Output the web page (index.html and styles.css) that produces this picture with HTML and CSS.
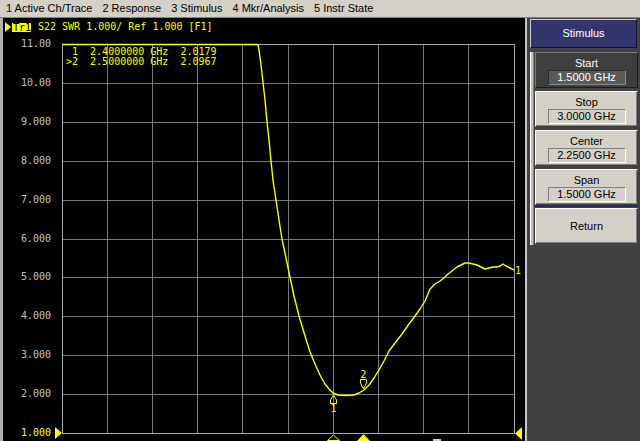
FILE: index.html
```html
<!DOCTYPE html>
<html>
<head>
<meta charset="utf-8">
<title>S22 SWR</title>
<link rel="stylesheet" href="styles.css">
</head>
<body>
<div class="menubar">
  <span class="menu-item">1 Active Ch/Trace</span>
  <span class="menu-item">2 Response</span>
  <span class="menu-item">3 Stimulus</span>
  <span class="menu-item">4 Mkr/Analysis</span>
  <span class="menu-item">5 Instr State</span>
</div>
<div class="main">
  <div class="chartwin">
    <div class="trace-header">
      <span class="tri"></span><span class="tr-badge">Tr1</span><span class="tr-text">S22 SWR 1.000/ Ref 1.000 [F1]</span>
    </div>
    <svg class="plot" viewBox="3 36 522 405" width="522" height="405">
      <g class="ylab">
        <text x="51" y="47">11.00</text>
        <text x="51" y="86">10.00</text>
        <text x="51" y="125">9.000</text>
        <text x="51" y="164">8.000</text>
        <text x="51" y="203">7.000</text>
        <text x="51" y="242">6.000</text>
        <text x="51" y="280">5.000</text>
        <text x="51" y="319">4.000</text>
        <text x="51" y="358">3.000</text>
        <text x="51" y="397">2.000</text>
        <text x="51" y="436" class="ylab-ref">1.000</text>
      </g>
      <path class="grid" d="M107.5 44V433M152.5 44V433M197.5 44V433M242.5 44V433M288.5 44V433M333.5 44V433M378.5 44V433M423.5 44V433M468.5 44V433M62 83.5H514M62 122.5H514M62 161.5H514M62 200.5H514M62 239.5H514M62 277.5H514M62 316.5H514M62 355.5H514M62 394.5H514"/>
      <rect class="frame" x="62.5" y="44.5" width="452" height="389"/>
      <text class="mk" x="66" y="55"> 1  2.4000000 GHz  2.0179</text>
      <text class="mk" x="66" y="65">&gt;2  2.5000000 GHz  2.0967</text>
      <polyline class="trace" points="62,44.5 258,44.5 259,50 261,65 263,82 265,100 267,122 269,140 271,161 273,180 276,200 279,220 282,239 286,258 290,277 294,296 299,316 305,336 310,352 315,364 320,375 325,384 329,389 333,393 338,395 346,395.5 354,395 359,393 364,390 369,385 374,378 379,370 384,361 389,351 395,343 402,334 409,324 415,316 420,309 425,301 430,289 435,284 440,281 444,278 448,274 452,271 457,267 461,265 465,263 469,263 473,264 477,265 481,267 485,269 489,268 493,267 497,267 500,266 503,264 506,266 510,268 514,270"/>
      <path class="mkshape" d="M333.5 395L336.5 400V403.5H330.5V400Z"/>
      <text class="mklab" x="333.5" y="412">1</text>
      <path class="mkshape" d="M360.5 379.5H366.5V383L363.5 389L360.5 383Z"/>
      <text class="mklab" x="363.5" y="378">2</text>
      <text class="mkend" x="515" y="274">1</text>
      <polygon class="fillmk" points="55,427 62,433 55,439"/>
      <polygon class="fillmk" points="522,427 515,433.5 522,440"/>
      <polygon class="mkshape" points="333.5,435 327.5,440.5 339.5,440.5"/>
      <polygon class="fillmk" points="363.5,434 357,441 370,441"/>
      <rect class="stim" x="433" y="439" width="8" height="2"/>
    </svg>
  </div>
  <div class="panel">
    <div class="softkey-title">Stimulus</div>
    <div class="softkey-body">
      <div class="splitter"></div>
      <div class="softkeys">
        <div class="softkey active"><div class="sk-label">Start</div><div class="sk-value">1.5000 GHz</div></div>
        <div class="softkey"><div class="sk-label">Stop</div><div class="sk-value">3.0000 GHz</div></div>
        <div class="softkey"><div class="sk-label">Center</div><div class="sk-value">2.2500 GHz</div></div>
        <div class="softkey"><div class="sk-label">Span</div><div class="sk-value">1.5000 GHz</div></div>
        <div class="sk-sep"></div>
        <div class="softkey plain">Return</div>
      </div>
    </div>
  </div>
</div>
</body>
</html>
```

FILE: styles.css
```css
html, body {
  margin: 0;
  padding: 0;
}
body {
  width: 640px;
  height: 441px;
  overflow: hidden;
  background: #d4d0c8;
  font-family: "Liberation Sans", Arial, sans-serif;
  font-size: 11px;
  color: #000;
}
.menubar {
  height: 17px;
  line-height: 17px;
  border-bottom: 1px solid #808080;
  display: flex;
  padding-left: 1px;
  white-space: nowrap;
}
.menu-item {
  padding: 0 5px;
}
.main {
  display: flex;
  height: 423px;
}
.chartwin {
  width: 527px;
  box-sizing: border-box;
  border-left: 3px solid #b0b0b0;
  border-right: 2px solid #c8c8c8;
  background: #000;
  display: flex;
  flex-direction: column;
}
.trace-header {
  height: 18px;
  display: flex;
  align-items: center;
  padding-left: 2px;
  font-family: "DejaVu Sans Mono", monospace;
  font-size: 10px;
  color: #ffff00;
  white-space: pre;
}
.tri {
  width: 0;
  height: 0;
  border-top: 5px solid transparent;
  border-bottom: 5px solid transparent;
  border-left: 6px solid #ffff00;
  margin-right: 1px;
}
.tr-badge {
  background: #ffff00;
  color: #000;
  height: 9px;
  line-height: 9px;
  padding: 0 0 0 1px;
  width: 18px;
}
.tr-text {
  margin-left: 7px;
  line-height: 10px;
}
.plot {
  display: block;
  width: 522px;
  height: 405px;
}
.ylab text {
  fill: #c0c0c0;
  font-family: "DejaVu Sans Mono", monospace;
  font-size: 10px;
  text-anchor: end;
}
.ylab .ylab-ref {
  fill: #ffff00;
}
.grid {
  stroke: #7a7a7a;
  stroke-width: 1;
  fill: none;
  shape-rendering: crispEdges;
}
.frame {
  stroke: #a8a8a8;
  stroke-width: 1;
  fill: none;
  shape-rendering: crispEdges;
}
.mk {
  fill: #ffff00;
  font-family: "DejaVu Sans Mono", monospace;
  font-size: 10px;
  white-space: pre;
}
.trace {
  fill: none;
  stroke: #ffff00;
  stroke-width: 1.4;
  stroke-linejoin: round;
}
.mkshape {
  fill: none;
  stroke: #ffff00;
  stroke-width: 1;
}
.mklab, .mkend {
  fill: #ffff00;
  font-family: "DejaVu Sans Mono", monospace;
  font-size: 10px;
}
.mklab {
  text-anchor: middle;
}
.fillmk {
  fill: #ffff00;
}
.stim {
  fill: #d0d0d0;
}
.panel {
  width: 113px;
  box-sizing: border-box;
  background: #424242;
  padding: 1px 2px 0 3px;
}
.softkey-title {
  width: 107px;
  height: 29px;
  box-sizing: border-box;
  background: #35356d;
  border: 1px solid;
  border-color: #c8c8d4 #14142e #14142e #c8c8d4;
  color: #fff;
  text-align: center;
  line-height: 27px;
}
.softkey-body {
  display: flex;
  gap: 1px;
  margin-top: 4px;
}
.splitter {
  width: 4px;
  height: 193px;
  box-sizing: border-box;
  background: #c4c0b8;
  border-left: 1px solid #ffffff;
  border-right: 1px solid #808080;
}
.softkeys {
  width: 103px;
  display: flex;
  flex-direction: column;
  gap: 3px;
}
.softkey {
  height: 36px;
  box-sizing: border-box;
  background: #d4d0c8;
  border: 1px solid;
  border-color: #ffffff #404040 #404040 #ffffff;
  box-shadow: inset -1px -1px #808080;
  display: flex;
  flex-direction: column;
  align-items: center;
  padding-top: 4px;
}
.sk-label {
  line-height: 13px;
}
.sk-value {
  width: 78px;
  height: 15px;
  box-sizing: border-box;
  border: 1px solid;
  border-color: #808080 #ffffff #ffffff #808080;
  line-height: 13px;
  text-align: center;
}
.softkey.active {
  background: #3e3e3e;
  color: #fff;
  border-color: #7a7a7a #1e1e1e #1e1e1e #7a7a7a;
  box-shadow: none;
}
.softkey.active .sk-value {
  background: #5a5a5a;
  border-color: #2c2c2c #8a8a8a #8a8a8a #2c2c2c;
}
.sk-sep {
  height: 2px;
  background: #2a2a62;
  margin: -3px 0 -2px;
}
.softkey.plain {
  padding-top: 0;
  line-height: 34px;
  display: block;
  text-align: center;
}
```
